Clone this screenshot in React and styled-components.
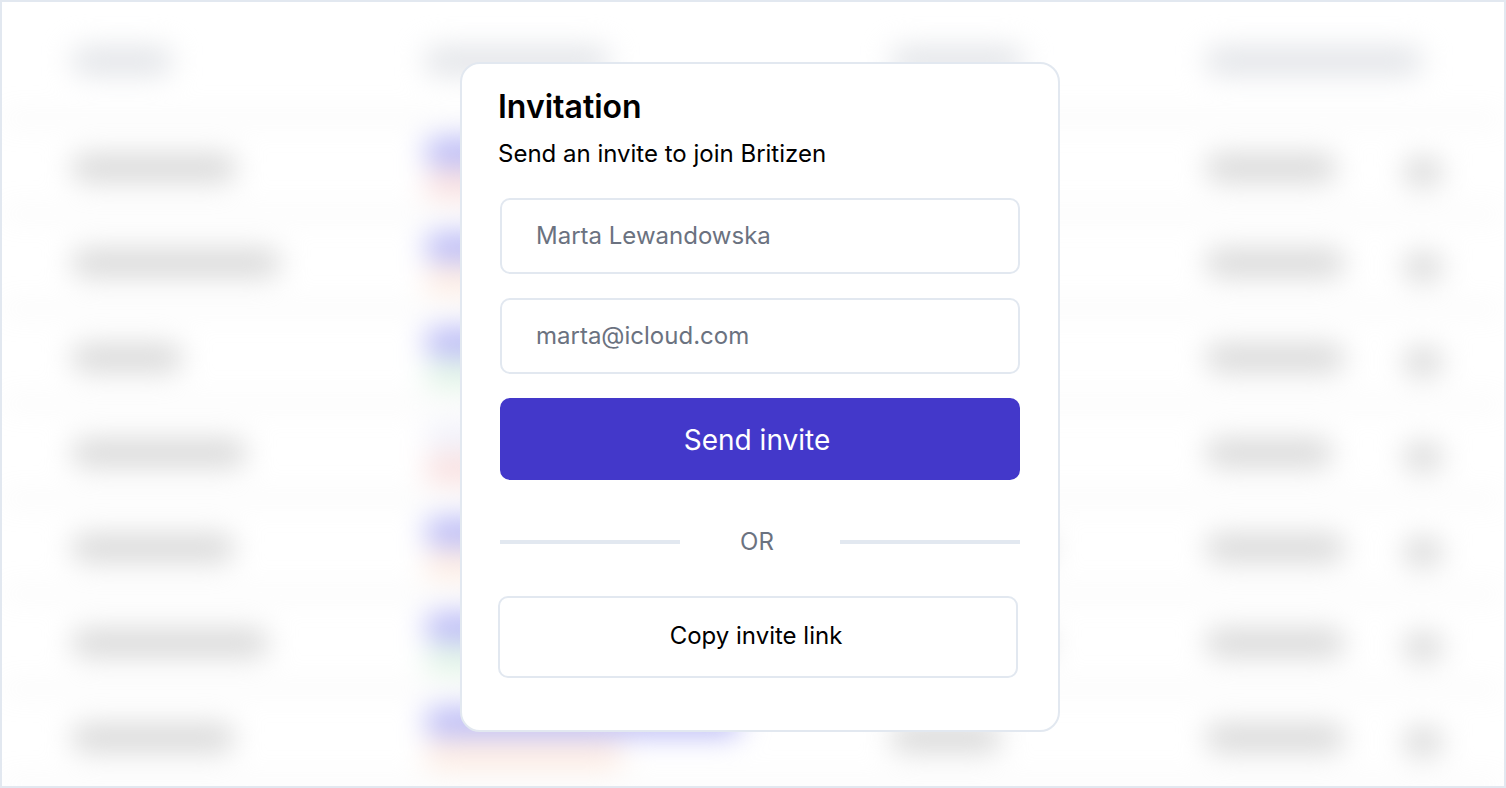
import React from "react";
import styled, { createGlobalStyle } from "styled-components";

const GlobalStyle = createGlobalStyle`
  *, *::before, *::after { box-sizing: border-box; }
  body {
    margin: 0;
    background: #ffffff;
    color: #000000;
    font-family: Inter, "Liberation Sans", sans-serif;
  }
`;

const Page = styled.main`
  display: grid;
  min-height: 100vh;
  border: 2px solid #e2e8f0;
  overflow: hidden;
`;

const Backdrop = styled.div`
  grid-area: 1 / 1;
  overflow: hidden;
`;

const Placeholder = styled.table`
  width: 100%;
  table-layout: fixed;
  border-collapse: separate;
  border-spacing: 0;
  filter: blur(14px);
`;

const Column = styled.col`
  width: ${(p) => p.$width};
`;

const HeadCell = styled.th`
  height: 118px;
  padding: 2px 0 0;
  border-bottom: 2px solid #dcdcdc;
  vertical-align: middle;
`;

const Cell = styled.td`
  height: 95px;
  padding: ${(p) => (p.$low ? "10px 0 0" : "2px 0 0")};
  border-bottom: 2px solid #dcdcdc;
  vertical-align: middle;
`;

const Bar = styled.div`
  width: ${(p) => p.$width}px;
  height: 28px;
  border-radius: 12px;
  background: ${(p) => p.$color || "#d8d8d8"};

  & + & {
    margin-top: 4px;
  }
`;

const Stage = styled.div`
  grid-area: 1 / 1;
  z-index: 1;
  display: flex;
  align-items: flex-start;
  justify-content: center;
  padding: 60px 0 54px 14px;
`;

const Card = styled.section`
  width: 100%;
  max-width: 600px;
  padding: 23px 36px 52px;
  border: 2px solid #e2e8f0;
  border-radius: 20px;
  background: #ffffff;
`;

const Title = styled.h1`
  margin: 0;
  font-size: 32px;
  line-height: 40px;
  font-weight: 600;
`;

const Subtitle = styled.p`
  margin: 11px 0 28px;
  font-size: 24px;
  line-height: 32px;
`;

const Form = styled.form`
  display: flex;
  flex-direction: column;
  gap: 24px;
  padding: 0 2px;
`;

const Field = styled.input`
  width: 100%;
  height: 76px;
  padding: 0 34px 2px;
  border: 2px solid #e2e8f0;
  border-radius: 10px;
  background: #ffffff;
  color: #6b7280;
  font-family: inherit;
  font-size: 24px;
`;

const Button = styled.button`
  width: 100%;
  max-width: 520px;
  height: 82px;
  padding: ${(p) => (p.$primary ? "2px 6px 0 0" : "0 4px 4px 0")};
  border: 2px solid ${(p) => (p.$primary ? "#4338ca" : "#e2e8f0")};
  border-radius: 10px;
  background: ${(p) => (p.$primary ? "#4338ca" : "#ffffff")};
  color: ${(p) => (p.$primary ? "#ffffff" : "#000000")};
  font-family: inherit;
  font-size: ${(p) => (p.$primary ? 28 : 24)}px;
  cursor: pointer;
`;

const Divider = styled.div`
  display: flex;
  align-items: center;
  padding: 0 2px;
  margin: 46px 0 38px;
`;

const Rule = styled.span`
  flex: 0 1 180px;
  height: 4px;
  background: #e2e8f0;
`;

const DividerText = styled.span`
  flex: 1;
  padding-right: 6px;
  color: #6b7280;
  font-size: 24px;
  line-height: 32px;
  text-align: center;
`;

const BLUE = "#b8b8f6";
const PALE = "#f1f1fa";
const RED = "#f9dfdf";
const ORANGE = "#fdebe2";
const GREEN = "#e0f4e6";

const columnWidths = ["70px", "23.5%", "31%", "21%", "13.2%", "auto"];
const heads = [100, 184, 132, 216];

const rows = [
  { name: 164, top: BLUE, bottom: RED, tags: [300, 190], role: 110, date: 130 },
  { name: 208, top: BLUE, bottom: ORANGE, tags: [300, 190], role: 110, date: 138 },
  { name: 110, top: BLUE, bottom: GREEN, tags: [300, 190], role: 110, date: 138 },
  { name: 174, top: PALE, bottom: RED, tags: [300, 190], role: 110, date: 126 },
  { name: 162, top: BLUE, bottom: ORANGE, tags: [300, 190], role: 160, date: 138 },
  { name: 196, top: BLUE, bottom: GREEN, tags: [300, 190], role: 160, date: 138 },
  { name: 162, top: BLUE, bottom: ORANGE, tags: [316, 198], role: 110, date: 138 },
];

function TeamPlaceholder() {
  return (
    <Placeholder aria-hidden="true">
      <colgroup>
        {columnWidths.map((width) => (
          <Column key={width} $width={width} />
        ))}
      </colgroup>
      <thead>
        <tr>
          <HeadCell />
          {heads.map((width) => (
            <HeadCell key={width}>
              <Bar $width={width} $color="#e2e4e8" />
            </HeadCell>
          ))}
          <HeadCell />
        </tr>
      </thead>
      <tbody>
        {rows.map((row, i) => (
          <tr key={i}>
            <Cell />
            <Cell>
              <Bar $width={row.name} />
            </Cell>
            <Cell>
              <Bar $width={row.tags[0]} $color={row.top} />
              <Bar $width={row.tags[1]} $color={row.bottom} />
            </Cell>
            <Cell>
              <Bar $width={row.role} />
            </Cell>
            <Cell>
              <Bar $width={row.date} />
            </Cell>
            <Cell $low>
              <Bar $width={38} />
            </Cell>
          </tr>
        ))}
      </tbody>
    </Placeholder>
  );
}

export default function App() {
  return (
    <>
      <GlobalStyle />
      <Page>
        <Backdrop>
          <TeamPlaceholder />
        </Backdrop>
        <Stage>
          <Card aria-labelledby="invite-title">
            <Title id="invite-title">Invitation</Title>
            <Subtitle>Send an invite to join Britizen</Subtitle>
            <Form onSubmit={(e) => e.preventDefault()}>
              <Field type="text" aria-label="Name" defaultValue="Marta Lewandowska" />
              <Field type="email" aria-label="Email" defaultValue="marta@icloud.com" />
              <Button type="submit" $primary>
                Send invite
              </Button>
            </Form>
            <Divider>
              <Rule />
              <DividerText>OR</DividerText>
              <Rule />
            </Divider>
            <Button type="button">Copy invite link</Button>
          </Card>
        </Stage>
      </Page>
    </>
  );
}
